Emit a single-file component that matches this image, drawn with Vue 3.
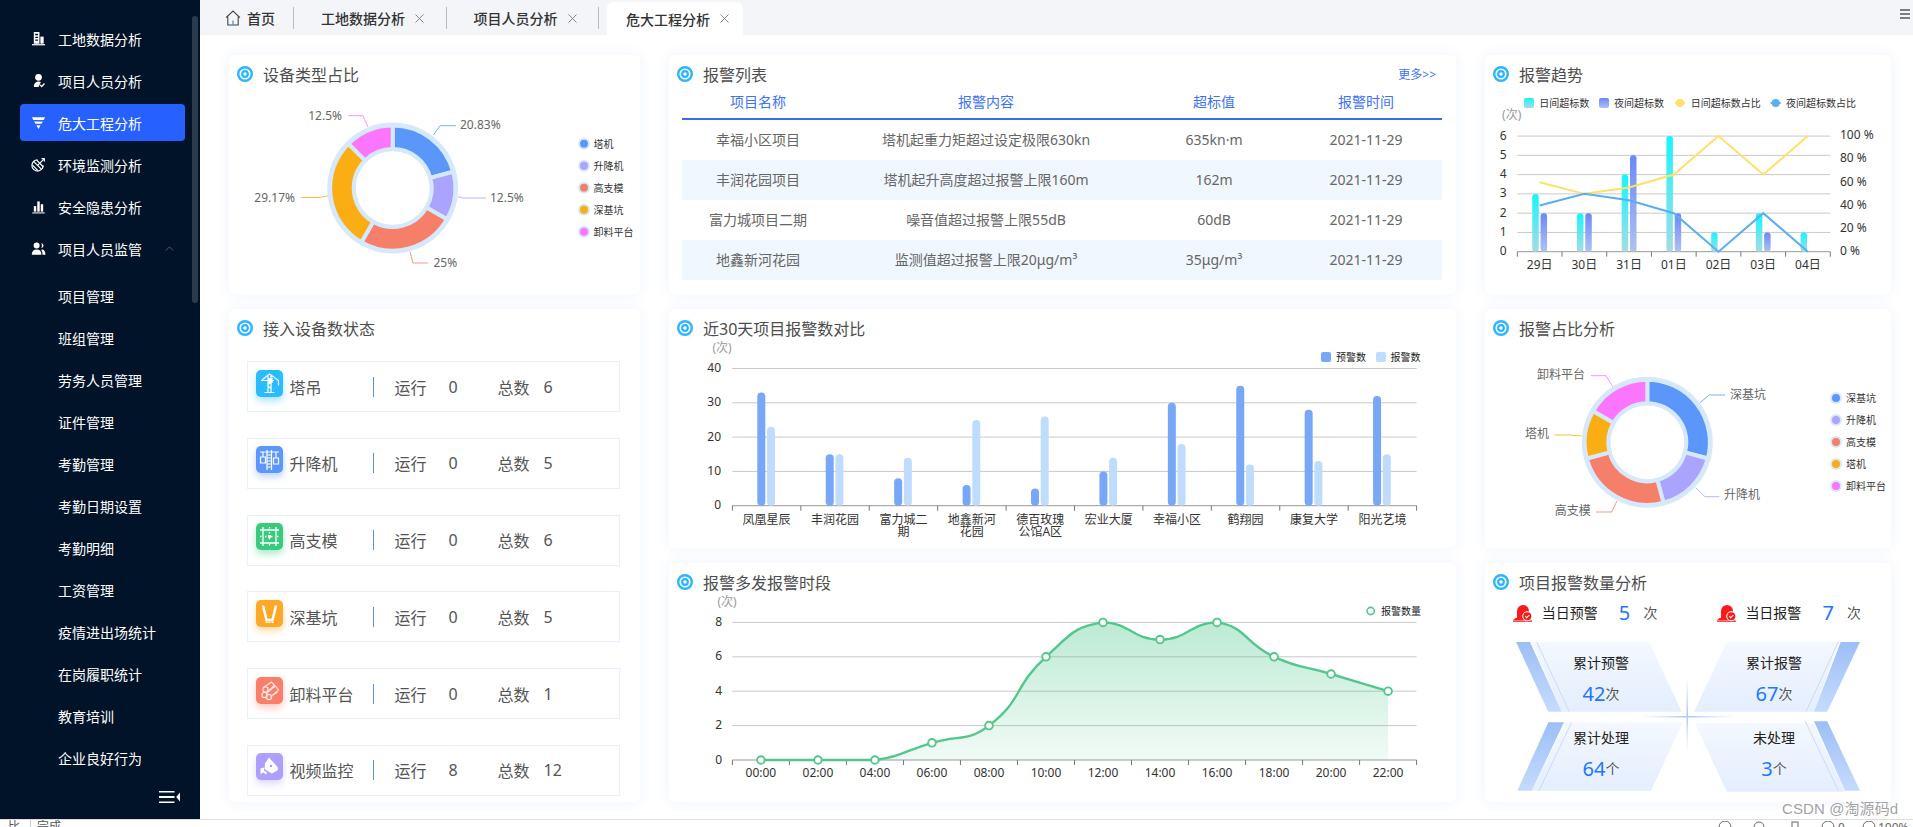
<script setup>
const menuTop = [
  { t: '工地数据分析', fill: ['M3 1h6v12.5H3zM4.5 3v1.5h3V3zM4.5 6v1.5h3V6zM4.5 9v1.5h3V9z', 'M10 6h3.5v7.5H10z', 'M1 14h14v1.3H1z'], stroke: [] },
  { t: '项目人员分析', fill: ['M8 1a3.6 3.6 0 1 1 0 7.2A3.6 3.6 0 0 1 8 1z', 'M3 15c0-3.6 2-6 5-6 1 0 1.8.2 2.6.7L8 15z'], stroke: ['M9.8 12.6l1.6 1.8 3-3.2'] },
  { t: '危大工程分析', active: true, fill: ['M1 2.5h14L13.6 5.2H2.4z', 'M3.4 6.8h9.2L11.2 9.4H4.8z', 'M5.8 11h4.4L8 14.8z'], stroke: [] },
  { t: '环境监测分析', fill: [], stroke: ['M7 3a6 6 0 1 0 6 6', 'M3 5l8 8', 'M1.6 8.6l5.6 5.6', 'M6 3.4l7 7', 'M7 9l7-7', 'M11.2 1.8H14.2V4.8'] },
  { t: '安全隐患分析', fill: ['M3 7.6h2.6v5.9H3z', 'M6.7 2.6h2.6v10.9H6.7z', 'M10.4 5.6H13v7.9h-2.6z', 'M1.4 14.3h13.2v1.1H1.4z'], stroke: [] },
  { t: '项目人员监管', arrow: true, fill: ['M6 1.6a3.2 3.2 0 1 1 0 6.4 3.2 3.2 0 0 1 0-6.4z', 'M.8 14.6C.8 11 2.8 9 6 9s5.2 2 5.2 5.6z', 'M11 2a2.9 2.9 0 0 1 0 5.7C11.8 6 11.8 3.8 11 2z', 'M12.2 9c2 .5 3.2 2.4 3.2 5.6h-3.1c0-2.3-.5-4-1.6-5.2z'], stroke: [] }
]
const menuSub = ['项目管理', '班组管理', '劳务人员管理', '证件管理', '考勤管理', '考勤日期设置', '考勤明细', '工资管理', '疫情进出场统计', '在岗履职统计', '教育培训', '企业良好行为']
const tabs = [{ t: '工地数据分析' }, { t: '项目人员分析' }]
const alarms = [
  ['幸福小区项目', '塔机起重力矩超过设定极限630kn', '635kn·m', '2021-11-29'],
  ['丰润花园项目', '塔机起升高度超过报警上限160m', '162m', '2021-11-29'],
  ['富力城项目二期', '噪音值超过报警上限55dB', '60dB', '2021-11-29'],
  ['地鑫新河花园', '监测值超过报警上限20μg/m³', '35μg/m³', '2021-11-29']
]
const devices = [
  { n: '塔吊', c: 'c1', run: 0, total: 6, k: 'crane' },
  { n: '升降机', c: 'c2', run: 0, total: 5, k: 'lift' },
  { n: '高支模', c: 'c3', run: 0, total: 6, k: 'grid' },
  { n: '深基坑', c: 'c4', run: 0, total: 5, k: 'pit' },
  { n: '卸料平台', c: 'c5', run: 0, total: 1, k: 'pipe' },
  { n: '视频监控', c: 'c6', run: 8, total: 12, k: 'cam' }
]

const BLUE = '#5b97fb', PURP = '#aaa4fe', RED = '#f57f69', GOLD = '#fbad14', PINK = '#fb75fd'

function pt(cx, cy, r, a) {
  const t = (a * 2 * Math.PI) - Math.PI / 2
  return [cx + r * Math.cos(t), cy + r * Math.sin(t)]
}
function arc(cx, cy, R, r, a0, a1) {
  const large = a1 - a0 > 0.5 ? 1 : 0
  const p1 = pt(cx, cy, R, a0), p2 = pt(cx, cy, R, a1), p3 = pt(cx, cy, r, a1), p4 = pt(cx, cy, r, a0)
  return `M${p1[0]} ${p1[1]}A${R} ${R} 0 ${large} 1 ${p2[0]} ${p2[1]}L${p3[0]} ${p3[1]}A${r} ${r} 0 ${large} 0 ${p4[0]} ${p4[1]}Z`
}
function donut(cx, cy, data) {
  let a = 0
  return data.map(d => {
    const s = { d: arc(cx, cy, 62.6, 39, a, a + d.v), c: d.c }
    a += d.v
    return s
  })
}
const d1 = { cx: 392.7, cy: 188 }
const d1Seg = donut(d1.cx, d1.cy, [
  { v: .2083, c: BLUE }, { v: .125, c: PURP }, { v: .25, c: RED }, { v: .2917, c: GOLD }, { v: .125, c: PINK }
])
const d1Lines = [
  { p: '433.5,135 440,125.7 456,125.7', c: BLUE, t: '20.83%', x: 460, y: 124.5, a: 'start' },
  { p: '458,196.7 463,198 486,198', c: PURP, t: '12.5%', x: 490, y: 197, a: 'start' },
  { p: '410,251.7 413,263 428,263', c: RED, t: '25%', x: 433.5, y: 262, a: 'start' },
  { p: '328,196 318,197.5 301,197.5', c: GOLD, t: '29.17%', x: 295, y: 197, a: 'end' },
  { p: '368,127 363,115.7 348,115.7', c: PINK, t: '12.5%', x: 342, y: 115, a: 'end' }
]
const d1Legend = [['塔机', BLUE], ['升降机', PURP], ['高支模', RED], ['深基坑', GOLD], ['卸料平台', PINK]]
  .map((l, i) => ({ t: l[0], c: l[1], y: 143.7 + 22 * i }))

const d2 = { cx: 1647.3, cy: 442.3 }
const d2Seg = donut(d2.cx, d2.cy, [
  { v: 7 / 24, c: BLUE }, { v: 4 / 24, c: PURP }, { v: 6 / 24, c: RED }, { v: 3 / 24, c: GOLD }, { v: 4 / 24, c: PINK }
])
const d2Lines = [
  { p: '1700,402.7 1709.3,395 1725,395', c: BLUE, t: '深基坑', x: 1730, y: 394, a: 'start' },
  { p: '1695.7,487.7 1705,496.7 1719.3,496.7', c: PURP, t: '升降机', x: 1724, y: 494, a: 'start' },
  { p: '1617,501 1611.7,512 1596,512', c: RED, t: '高支模', x: 1590.7, y: 510.7, a: 'end' },
  { p: '1581.7,436 1570,435 1554.3,435', c: GOLD, t: '塔机', x: 1549, y: 433.7, a: 'end' },
  { p: '1612.7,386.7 1606,375.7 1590.7,375.7', c: PINK, t: '卸料平台', x: 1585, y: 374.7, a: 'end' }
]
const d2Legend = [['深基坑', BLUE], ['升降机', PURP], ['高支模', RED], ['塔机', GOLD], ['卸料平台', PINK]]
  .map((l, i) => ({ t: l[0], c: l[1], y: 398 + 22 * i }))

/* trend chart */
const tr = { x0: 1517.3, x1: 1830.3, y0: 251.7, unit: 19.27 }
const trW = (tr.x1 - tr.x0) / 7
const trA = [3, 2, 4, 6, 1, 2, 1], trB = [2, 2, 5, 2, 0, 1, 0]
const trDays = ['29日', '30日', '31日', '01日', '02日', '03日', '04日']
const trPctA = [60, 50, 55.5, 66.7, 100, 66.7, 100], trPctB = [40, 50, 44.4, 33.3, 0, 33.3, 0]
const trCx = i => tr.x0 + trW * (i + .5)
const trGrid = [1, 2, 3, 4, 5, 6].map(v => tr.y0 - v * tr.unit)
const trYL = [0, 1, 2, 3, 4, 5, 6].map(v => ({ v, y: tr.y0 - v * tr.unit }))
const trYR = [0, 20, 40, 60, 80, 100].map((v, i) => ({ t: v + ' %', y: 250.5 - i * 23.15 }))
const trTicks = Array.from({ length: 8 }, (_, i) => tr.x0 + trW * i)
const trBarsA = trA.map((v, i) => ({ x: trCx(i) - 7.4, h: v * tr.unit }))
const trBarsB = trB.map((v, i) => ({ x: trCx(i) + .9, h: v * tr.unit })).filter(b => b.h > 0)
const pctLine = arr => arr.map((v, i) => `${trCx(i)},${tr.y0 - v * 1.157}`).join(' ')

/* bar chart */
const br = { x0: 732.4, x1: 1416.6, y0: 505.7, unit: 3.43 }
const brW = (br.x1 - br.x0) / 10
const brA = [33, 15, 8, 6, 5, 10, 30, 35, 28, 32], brB = [23, 15, 14, 25, 26, 14, 18, 12, 13, 15]
const brNames = [['凤凰星辰'], ['丰润花园'], ['富力城二', '期'], ['地鑫新河', '花园'], ['德百玫瑰', '公馆A区'], ['宏业大厦'], ['幸福小区'], ['鹤翔园'], ['康复大学'], ['阳光艺境']]
const brCx = i => br.x0 + brW * (i + .5)
const brGrid = [10, 20, 30, 40].map(v => br.y0 - v * br.unit)
const brYL = [0, 10, 20, 30, 40].map(v => ({ v, y: br.y0 - v * br.unit }))
const brTicks = Array.from({ length: 11 }, (_, i) => br.x0 + brW * i)

/* line chart */
const ln = { x0: 732.4, x1: 1416.6, y0: 760, unit: 17.2 }
const lnW = (ln.x1 - ln.x0) / 12
const lnV = [0, 0, 0, 1, 2, 6, 8, 7, 8, 6, 5, 4]
const lnPts = lnV.map((v, i) => [ln.x0 + lnW * (i + .5), ln.y0 - v * ln.unit])
const lnLabels = lnV.map((_, i) => ({ t: String(i * 2).padStart(2, '0') + ':00', x: lnPts[i][0] }))
const lnGrid = [2, 4, 6, 8].map(v => ln.y0 - v * ln.unit)
const lnYL = [0, 2, 4, 6, 8].map(v => ({ v, y: ln.y0 - v * ln.unit }))
const lnTicks = Array.from({ length: 13 }, (_, i) => ln.x0 + lnW * i)

function smooth(pts, k = .5) {
  const n = pts.length
  let d = `M${pts[0][0]} ${pts[0][1]}`
  const clamp = (v, a, b) => Math.min(Math.max(v, Math.min(a, b)), Math.max(a, b))
  const len = (a, b) => Math.hypot(a[0] - b[0], a[1] - b[1])
  const cps = pts.map((p, i) => {
    const prev = pts[Math.max(i - 1, 0)], next = pts[Math.min(i + 1, n - 1)]
    const vx = next[0] - prev[0], vy = next[1] - prev[1]
    const lp = len(p, prev), ln2 = len(p, next)
    const tot = lp + ln2 || 1
    return {
      out: [p[0] + vx * k * ln2 / tot, clamp(p[1] + vy * k * ln2 / tot, p[1], next[1])],
      in: [p[0] - vx * k * lp / tot, clamp(p[1] - vy * k * lp / tot, p[1], prev[1])]
    }
  })
  for (let i = 1; i < n; i++) {
    d += `C${cps[i - 1].out[0]} ${cps[i - 1].out[1]} ${cps[i].in[0]} ${cps[i].in[1]} ${pts[i][0]} ${pts[i][1]}`
  }
  return d
}
const lnPath = smooth(lnPts)
const lnArea = `${lnPath}L${lnPts[11][0]} ${ln.y0}L${lnPts[0][0]} ${ln.y0}Z`

const alerts = [{ t: '当日预警', n: 5 }, { t: '当日报警', n: 7 }]
const panels = [
  { band: '1516,642 1530,642 1561.7,711.7 1548.3,711.7', main: '1531.7,642 1649.3,642 1681.7,711.7 1561.7,711.7', line: '1536.7,642 1569.3,711.7', t: '累计预警', n: '42', u: '次', cx: 1601, y1: 662, y2: 692.7 },
  { band: '1840.7,642 1860,642 1827.3,711.7 1814,711.7', main: '1726.7,642 1839.3,642 1814,711.7 1694,711.7', line: '1838.3,642 1806,711.7', t: '累计报警', n: '67', u: '次', cx: 1774, y1: 662, y2: 692.7 },
  { band: '1548.3,722.3 1564,722.3 1531.7,790.7 1517.3,790.7', main: '1565.5,722.3 1682.7,722.3 1651,790.7 1531.7,790.7', line: '1571.7,722.3 1539,790.7', t: '累计处理', n: '64', u: '个', cx: 1601, y1: 737, y2: 767.7 },
  { band: '1814,721.3 1827.3,721.3 1860,790.7 1845,790.7', main: '1695,723 1813.3,723 1845,791.7 1726.7,791.7', line: '1805,720.7 1838.3,790.7', t: '未处理', n: '3', u: '个', cx: 1774, y1: 737, y2: 767.7 }
]
</script>

<template>
  <div class="page">
    <aside class="side">
      <div class="thumb"></div>
      <ul class="menu">
        <li v-for="m in menuTop" :key="m.t" class="mi" :class="{ on: m.active }">
          <svg class="mic" viewBox="0 0 16 16" width="15" height="15">
            <path v-for="d in m.fill" :key="d" :d="d" fill="#fff" fill-rule="evenodd" />
            <path v-for="d in m.stroke" :key="d" :d="d" fill="none" stroke="#fff" stroke-width="1.3" />
          </svg>
          <span>{{ m.t }}</span>
          <svg v-if="m.arrow" class="chev" viewBox="0 0 10 6" width="9" height="5"><path d="M.5 5.5L5 1l4.5 4.5" fill="none" stroke="#5c6b7c" stroke-width="1" /></svg>
        </li>
      </ul>
      <ul class="sub">
        <li v-for="s in menuSub" :key="s">{{ s }}</li>
      </ul>
      <svg class="collapse" viewBox="0 0 21 12" width="21" height="12">
        <path d="M0 .5h15.5M0 6h15.5M0 11.5h15.5" stroke="#fff" stroke-width="1.8" fill="none" />
        <path d="M21 1.6v8.8L17.2 6z" fill="#fff" />
      </svg>
    </aside>

    <main class="main">
      <nav class="tabs">
        <div class="tab home">
          <svg viewBox="0 0 16 16" width="16" height="16">
            <path d="M1 7.6L8 1l7 6.6M2.8 6.4V15h10.4V6.4" fill="none" stroke="#444" stroke-width="1.1" />
            <path d="M7.4 10.5h1.2V15H7.4z" fill="#2f8fe8" />
          </svg>
          <span>首页</span>
        </div>
        <div v-for="tb in tabs" :key="tb.t" class="tab">
          <span>{{ tb.t }}</span>
          <svg class="x" viewBox="0 0 9 9" width="9" height="9"><path d="M.5.5l8 8M8.5.5l-8 8" stroke="#888" stroke-width="1" /></svg>
        </div>
        <div class="tab active">
          <span>危大工程分析</span>
          <svg class="x" viewBox="0 0 9 9" width="9" height="9"><path d="M.5.5l8 8M8.5.5l-8 8" stroke="#888" stroke-width="1" /></svg>
        </div>
        <svg class="more" viewBox="0 0 10 10" width="10" height="10"><path d="M0 1h10M0 5h10M0 9h10" stroke="#555" stroke-width="1.6" /></svg>
      </nav>

      <section class="grid">
        <!-- device ratio -->
        <article class="card">
          <header class="ct"><svg class="ring" viewBox="0 0 16 16" width="16" height="16"><circle cx="8" cy="8" r="6.8" fill="none" stroke="#2bb5ff" stroke-width="2.4" /><circle cx="8" cy="8" r="2.8" fill="none" stroke="#2bb5ff" stroke-width="2.2" /></svg><h3>设备类型占比</h3></header>
          <svg class="ch" viewBox="229 93 410 201" width="410" height="201">
            <circle :cx="d1.cx" :cy="d1.cy" r="65.5" fill="#d6e9fc" />
            <circle :cx="d1.cx" :cy="d1.cy" r="37" fill="#fff" />
            <path v-for="s in d1Seg" :key="s.c" :d="s.d" :fill="s.c" stroke="#d6e9fc" stroke-width="4" />
            <g v-for="l in d1Lines" :key="l.t + l.x">
              <polyline :points="l.p" fill="none" :stroke="l.c" stroke-width="1" opacity=".8" />
              <text :x="l.x" :y="l.y" :text-anchor="l.a" class="t12 mid" fill="#666">{{ l.t }}</text>
            </g>
            <g v-for="l in d1Legend" :key="l.t">
              <circle cx="584" :cy="l.y" r="6" fill="#d6e9fc" />
              <circle cx="584" :cy="l.y" r="4" :fill="l.c" />
              <text x="593.5" :y="l.y" class="t10 mid" fill="#333">{{ l.t }}</text>
            </g>
          </svg>
        </article>

        <!-- alarm list -->
        <article class="card">
          <header class="ct"><svg class="ring" viewBox="0 0 16 16" width="16" height="16"><circle cx="8" cy="8" r="6.8" fill="none" stroke="#2bb5ff" stroke-width="2.4" /><circle cx="8" cy="8" r="2.8" fill="none" stroke="#2bb5ff" stroke-width="2.2" /></svg><h3>报警列表</h3><a class="mores">更多&gt;&gt;</a></header>
          <div class="table">
            <div class="tr th"><span>项目名称</span><span>报警内容</span><span>超标值</span><span>报警时间</span></div>
            <div v-for="(r, i) in alarms" :key="i" class="tr td" :class="{ alt: i % 2 === 1 }">
              <span v-for="c in r" :key="c">{{ c }}</span>
            </div>
          </div>
        </article>

        <!-- trend -->
        <article class="card">
          <header class="ct"><svg class="ring" viewBox="0 0 16 16" width="16" height="16"><circle cx="8" cy="8" r="6.8" fill="none" stroke="#2bb5ff" stroke-width="2.4" /><circle cx="8" cy="8" r="2.8" fill="none" stroke="#2bb5ff" stroke-width="2.2" /></svg><h3>报警趋势</h3></header>
          <svg class="ch" viewBox="1485 93 406 201" width="406" height="201">
            <defs>
              <linearGradient id="gCy" x1="0" y1="0" x2="0" y2="1"><stop offset="0" stop-color="#14f6ff" /><stop offset="1" stop-color="#a6dbe3" /></linearGradient>
              <linearGradient id="gBl" x1="0" y1="0" x2="0" y2="1"><stop offset="0" stop-color="#6a88f8" /><stop offset="1" stop-color="#b0c2ee" /></linearGradient>
            </defs>
            <rect x="1524" y="98" width="10" height="10" rx="2" fill="url(#gCy)" />
            <text x="1539.3" y="102.7" class="t10 mid" fill="#333">日间超标数</text>
            <rect x="1599" y="98" width="10" height="10" rx="2" fill="url(#gBl)" />
            <text x="1614" y="102.7" class="t10 mid" fill="#333">夜间超标数</text>
            <path d="M1675 103h10" stroke="#fde168" stroke-width="2" /><circle cx="1680" cy="103" r="4" fill="#fde168" />
            <text x="1690.7" y="102.7" class="t10 mid" fill="#333">日间超标数占比</text>
            <path d="M1770.7 103h10" stroke="#58aff5" stroke-width="2" /><circle cx="1775.7" cy="103" r="4" fill="#58aff5" />
            <text x="1786" y="102.7" class="t10 mid" fill="#333">夜间超标数占比</text>
            <text x="1511.7" y="114" class="t12 mid" text-anchor="middle" fill="#999">(次)</text>
            <path v-for="y in trGrid" :key="y" :d="`M${tr.x0} ${y}H${tr.x1}`" stroke="#c9c9c9" stroke-width="1" />
            <path :d="`M${tr.x0} ${tr.y0}H${tr.x1}`" stroke="#999" stroke-width="1" />
            <path v-for="x in trTicks" :key="x" :d="`M${x} ${tr.y0}v5`" stroke="#777" stroke-width="1" />
            <rect v-for="b in trBarsA" :key="b.x" :x="b.x" :y="tr.y0 - b.h" width="6.5" :height="b.h" rx="3" fill="url(#gCy)" />
            <rect v-for="b in trBarsB" :key="b.x" :x="b.x" :y="tr.y0 - b.h" width="6.5" :height="b.h" rx="3" fill="url(#gBl)" />
            <polyline :points="pctLine(trPctA)" fill="none" stroke="#fde168" stroke-width="2" />
            <polyline :points="pctLine(trPctB)" fill="none" stroke="#58aff5" stroke-width="2" />
            <text v-for="l in trYL" :key="l.v" x="1506.7" :y="l.y - 1" text-anchor="end" class="t12 mid" fill="#333">{{ l.v }}</text>
            <text v-for="l in trYR" :key="l.t" x="1840" :y="l.y" class="t12 mid" fill="#333">{{ l.t }}</text>
            <text v-for="(d, i) in trDays" :key="d" :x="trCx(i)" y="264.5" text-anchor="middle" class="t12 mid" fill="#333">{{ d }}</text>
          </svg>
        </article>

        <!-- devices -->
        <article class="card span2">
          <header class="ct"><svg class="ring" viewBox="0 0 16 16" width="16" height="16"><circle cx="8" cy="8" r="6.8" fill="none" stroke="#2bb5ff" stroke-width="2.4" /><circle cx="8" cy="8" r="2.8" fill="none" stroke="#2bb5ff" stroke-width="2.2" /></svg><h3>接入设备数状态</h3></header>
          <div class="devs">
            <div v-for="d in devices" :key="d.n" class="dev">
              <div class="dic" :class="d.c">
                <svg viewBox="0 0 27 27" width="27" height="27">
                  <g v-if="d.k === 'crane'" fill="none" stroke="#fff" stroke-width="1.2">
                    <path d="M6 10l7.5-6 9 6.5M5 10.5h13M12 5v17M15 5v17M12 9l3 2.5M15 12l-3 2.5M12 16l3 2.5M8.5 22.5h10M22.5 10.5v5" />
                    <path d="M13 8.5h3v4h-3z" fill="#fff" />
                  </g>
                  <g v-else-if="d.k === 'lift'" fill="none" stroke="#fff" stroke-width="1.2">
                    <path d="M4 6h19M11 4v20M15.5 4v20M11 9h4.5M11 12h4.5M11 15h4.5M11 18h4.5M11 21h4.5M7 6v5M20 6v6" />
                    <path d="M4.5 11h5v6h-5zM17.5 12h5v6h-5z" />
                  </g>
                  <g v-else-if="d.k === 'grid'" fill="none" stroke="#fff" stroke-width="1.3">
                    <path d="M7 4v19M20 4v19M4 7h19M4 20h19" />
                    <path d="M4 13.5h2M21 13.5h2M13.5 4v2M13.5 21v2M9 13.5h9M13.5 9v9" stroke-dasharray="1.5 1.5" />
                    <rect x="12" y="12" width="3" height="3" fill="#fff" stroke="none" />
                  </g>
                  <g v-else-if="d.k === 'pit'">
                    <path d="M7 5.5L10.5 20h6L20 5.5" fill="none" stroke="#fff" stroke-width="2.5" />
                    <path d="M9.5 22.3h8" stroke="#fff" stroke-width="1.5" stroke-dasharray="2 1" />
                  </g>
                  <g v-else-if="d.k === 'pipe'" fill="none" stroke="#ffe4de" stroke-width="1.2">
                    <circle cx="8.5" cy="18" r="2.6" />
                    <circle cx="13" cy="20" r="2.6" />
                    <circle cx="9.5" cy="12.5" r="2.6" />
                    <path d="M7.5 10.5l8-5.5 3 3.5-7 6M10.5 16l9-7 3 4-8 7M15.5 19l6-4" />
                  </g>
                  <g v-else fill="#fff">
                    <path d="M13 4.5l8.5 9.5.5 3-6 3.5-4.5-2.5-3-2 .5-5.5z" />
                    <path d="M4.5 15.5l3.5-1v3l3 2-1 2-2.5-2-3 1.5z" />
                    <circle cx="15" cy="13" r="1.3" fill="#ab9fff" />
                  </g>
                </svg>
              </div>
              <span class="dn">{{ d.n }}</span>
              <i class="dv"></i>
              <span class="dl">运行</span>
              <span class="dr">{{ d.run }}</span>
              <span class="dl">总数</span>
              <span class="dt">{{ d.total }}</span>
            </div>
          </div>
        </article>

        <!-- bars -->
        <article class="card">
          <header class="ct"><svg class="ring" viewBox="0 0 16 16" width="16" height="16"><circle cx="8" cy="8" r="6.8" fill="none" stroke="#2bb5ff" stroke-width="2.4" /><circle cx="8" cy="8" r="2.8" fill="none" stroke="#2bb5ff" stroke-width="2.2" /></svg><h3>近30天项目报警数对比</h3></header>
          <svg class="ch" viewBox="669 347 787 201" width="787" height="201">
            <text x="722" y="347" text-anchor="middle" class="t12 mid" fill="#999">(次)</text>
            <rect x="1321" y="352" width="10" height="10" rx="2" fill="#78a7f7" />
            <text x="1336" y="357" class="t10 mid" fill="#222">预警数</text>
            <rect x="1376" y="352" width="10" height="10" rx="2" fill="#bfdcff" />
            <text x="1390.6" y="357" class="t10 mid" fill="#222">报警数</text>
            <path v-for="y in brGrid" :key="y" :d="`M${br.x0} ${y}H${br.x1}`" stroke="#c9c9c9" stroke-width="1" />
            <path :d="`M${br.x0} ${br.y0}H${br.x1}`" stroke="#999" stroke-width="1" />
            <path v-for="x in brTicks" :key="x" :d="`M${x} ${br.y0}v5`" stroke="#777" stroke-width="1" />
            <rect v-for="(v, i) in brA" :key="'a' + i" :x="brCx(i) - 9.3" :y="br.y0 - v * br.unit" width="8" :height="v * br.unit" rx="4" fill="#78a7f7" />
            <rect v-for="(v, i) in brB" :key="'b' + i" :x="brCx(i) + .4" :y="br.y0 - v * br.unit" width="8" :height="v * br.unit" rx="4" fill="#bfdcff" />
            <text v-for="l in brYL" :key="l.v" x="721" :y="l.y - 1" text-anchor="end" class="t12 mid" fill="#333">{{ l.v }}</text>
            <g v-for="(n, i) in brNames" :key="i">
              <text v-for="(s, j) in n" :key="s" :x="brCx(i)" :y="519 + j * 12" text-anchor="middle" class="t12 mid" fill="#333">{{ s }}</text>
            </g>
          </svg>
        </article>

        <!-- alarm share -->
        <article class="card">
          <header class="ct"><svg class="ring" viewBox="0 0 16 16" width="16" height="16"><circle cx="8" cy="8" r="6.8" fill="none" stroke="#2bb5ff" stroke-width="2.4" /><circle cx="8" cy="8" r="2.8" fill="none" stroke="#2bb5ff" stroke-width="2.2" /></svg><h3>报警占比分析</h3></header>
          <svg class="ch" viewBox="1485 347 406 201" width="406" height="201">
            <circle :cx="d2.cx" :cy="d2.cy" r="65.5" fill="#d6e9fc" />
            <circle :cx="d2.cx" :cy="d2.cy" r="37" fill="#fff" />
            <path v-for="s in d2Seg" :key="s.c" :d="s.d" :fill="s.c" stroke="#d6e9fc" stroke-width="4" />
            <g v-for="l in d2Lines" :key="l.t">
              <polyline :points="l.p" fill="none" :stroke="l.c" stroke-width="1" opacity=".8" />
              <text :x="l.x" :y="l.y" :text-anchor="l.a" class="t12 mid" fill="#666">{{ l.t }}</text>
            </g>
            <g v-for="l in d2Legend" :key="l.t">
              <circle cx="1836" :cy="l.y" r="6" fill="#d6e9fc" />
              <circle cx="1836" :cy="l.y" r="4" :fill="l.c" />
              <text x="1846" :y="l.y" class="t10 mid" fill="#333">{{ l.t }}</text>
            </g>
          </svg>
        </article>

        <!-- line -->
        <article class="card">
          <header class="ct"><svg class="ring" viewBox="0 0 16 16" width="16" height="16"><circle cx="8" cy="8" r="6.8" fill="none" stroke="#2bb5ff" stroke-width="2.4" /><circle cx="8" cy="8" r="2.8" fill="none" stroke="#2bb5ff" stroke-width="2.2" /></svg><h3>报警多发报警时段</h3></header>
          <svg class="ch" viewBox="669 601 787 201" width="787" height="201">
            <defs>
              <linearGradient id="gArea" gradientUnits="userSpaceOnUse" x1="0" y1="622" x2="0" y2="760"><stop offset="0" stop-color="#4fc98c" stop-opacity=".38" /><stop offset="1" stop-color="#4fc98c" stop-opacity=".08" /></linearGradient>
            </defs>
            <text x="727" y="601" text-anchor="middle" class="t12 mid" fill="#999">(次)</text>
            <circle cx="1370.7" cy="611" r="3.6" fill="#fff" stroke="#4fc98c" stroke-width="1.6" />
            <text x="1381" y="611" class="t10 mid" fill="#222">报警数量</text>
            <path v-for="y in lnGrid" :key="y" :d="`M${ln.x0} ${y}H${ln.x1}`" stroke="#c9c9c9" stroke-width="1" />
            <path :d="`M${ln.x0} ${ln.y0}H${ln.x1}`" stroke="#999" stroke-width="1" />
            <path v-for="x in lnTicks" :key="x" :d="`M${x} ${ln.y0}v5`" stroke="#777" stroke-width="1" />
            <path :d="lnArea" fill="url(#gArea)" />
            <path :d="lnPath" fill="none" stroke="#52c78c" stroke-width="2.4" />
            <circle v-for="(p, i) in lnPts" :key="i" :cx="p[0]" :cy="p[1]" r="3.8" fill="#fff" stroke="#52c78c" stroke-width="1.9" />
            <text v-for="l in lnYL" :key="l.v" x="722" :y="l.y - 1" text-anchor="end" class="t12 mid" fill="#333">{{ l.v }}</text>
            <text v-for="l in lnLabels" :key="l.t" :x="l.x" y="772.7" text-anchor="middle" class="t12 mid" fill="#333">{{ l.t }}</text>
          </svg>
        </article>

        <!-- counts -->
        <article class="card">
          <header class="ct"><svg class="ring" viewBox="0 0 16 16" width="16" height="16"><circle cx="8" cy="8" r="6.8" fill="none" stroke="#2bb5ff" stroke-width="2.4" /><circle cx="8" cy="8" r="2.8" fill="none" stroke="#2bb5ff" stroke-width="2.2" /></svg><h3>项目报警数量分析</h3></header>
          <div class="alerts">
            <div v-for="a in alerts" :key="a.t" class="al">
              <svg viewBox="0 0 20 19" width="20" height="19">
                <path d="M4 15V8a6 6 0 0 1 12 0v7z" fill="#f61c1c" />
                <path d="M0 17.2L2.5 15h14l2 2.2z" fill="#f61c1c" />
                <path d="M0 17.6h19v1.2H0z" fill="#f61c1c" />
                <circle cx="14.3" cy="13.2" r="5" fill="#fff" />
                <circle cx="14.3" cy="13.2" r="4" fill="#f61c1c" />
                <path d="M12.3 13.2l1.5 1.5 2.5-2.7" fill="none" stroke="#fff" stroke-width="1.1" />
              </svg>
              <span class="alt1">{{ a.t }}</span>
              <b class="aln">{{ a.n }}</b>
              <span class="alu">次</span>
            </div>
          </div>
          <svg class="ch" viewBox="1485 623 406 179" width="406" height="179">
            <defs>
              <linearGradient id="gMain" x1="0" y1="0" x2="0" y2="1"><stop offset="0" stop-color="#f4f8ff" /><stop offset="1" stop-color="#e4eefe" /></linearGradient>
              <linearGradient id="gBand" x1="0" y1="0" x2="0" y2="1"><stop offset="0" stop-color="#9dbff6" /><stop offset="1" stop-color="#c5dbfd" /></linearGradient>
              <linearGradient id="gStarH" x1="0" y1="0" x2="1" y2="0"><stop offset="0" stop-color="#bcd4fb" stop-opacity="0" /><stop offset=".5" stop-color="#a9c8fa" /><stop offset="1" stop-color="#bcd4fb" stop-opacity="0" /></linearGradient>
              <linearGradient id="gStarV" x1="0" y1="0" x2="0" y2="1"><stop offset="0" stop-color="#bcd4fb" stop-opacity="0" /><stop offset=".5" stop-color="#a9c8fa" /><stop offset="1" stop-color="#bcd4fb" stop-opacity="0" /></linearGradient>
            </defs>
            <g v-for="p in panels" :key="p.t">
              <polygon :points="p.main" fill="url(#gMain)" />
              <polygon :points="p.band" fill="url(#gBand)" />
              <polyline :points="p.line" fill="none" stroke="#bcd4fb" stroke-width=".8" />
              <text :x="p.cx" :y="p.y1" text-anchor="middle" class="t14 mid" fill="#222">{{ p.t }}</text>
              <text :x="p.cx" :y="p.y2" text-anchor="middle" class="mid"><tspan class="pn">{{ p.n }}</tspan><tspan class="pu">{{ p.u }}</tspan></text>
            </g>
            <rect x="1640" y="716" width="95" height="1.5" fill="url(#gStarH)" />
            <rect x="1686.5" y="676.7" width="1.5" height="76" fill="url(#gStarV)" />
          </svg>
        </article>
      </section>
    </main>

    <footer class="status">
      <span class="st1">比</span><i class="sep"></i><span>完成</span>
      <svg class="stic" viewBox="0 0 190 10" width="190" height="10">
        <g fill="none" stroke="#666" stroke-width="1">
          <circle cx="7" cy="6" r="6" /><circle cx="41" cy="6" r="5" /><rect x="74" y="1" width="6" height="8" /><circle cx="110" cy="6" r="6" /><circle cx="151" cy="6" r="6" />
        </g>
        <text x="120" y="11" class="t12" fill="#666">0</text>
        <text x="160" y="11" class="t12" fill="#666">100%</text>
      </svg>
    </footer>
    <div class="mark">CSDN @淘源码d</div>
  </div>
</template>

<style scoped>
.page {
  position: relative;
  display: grid;
  grid-template-columns: 200px 1fr;
  grid-template-rows: 819px 8px;
  width: 1913px;
  height: 827px;
  overflow: hidden;
  background: #fff;
  font-family: "Noto Sans", "Noto Sans CJK SC", sans-serif;
  color: #555;
}
.side {
  position: relative;
  background: #001329;
  padding-top: 20px;
  display: flex;
  flex-direction: column;
  overflow: hidden;
}
.thumb {
  position: absolute;
  left: 192px;
  top: 16px;
  width: 6px;
  height: 287px;
  border-radius: 3px;
  background: #2b3b4e;
}
.menu, .sub { list-style: none; margin: 0; padding: 0; }
.mi {
  display: flex;
  align-items: center;
  height: 37px;
  margin: 0 15px 5px 20px;
  padding-left: 11px;
  border-radius: 4px;
  color: #fff;
  font-size: 14px;
}
.mi.on { background: #2661ff; }
.mic { margin-right: 12px; flex: none; }
.chev { margin-left: 23px; }
.sub { padding-top: 4px; }
.sub li {
  height: 42px;
  line-height: 42px;
  padding-left: 58px;
  color: #fff;
  font-size: 14px;
}
.collapse { margin: 11px 0 0 159px; flex: none; }

.main { display: flex; flex-direction: column; min-width: 0; }
.tabs {
  position: relative;
  display: flex;
  align-items: stretch;
  height: 35px;
  background: #f4f5f9;
  font-size: 14px;
  color: #333;
  font-weight: 500;
}
.tab {
  display: flex;
  align-items: center;
  margin-top: 7px;
  height: 22px;
  padding: 0 21.5px 0 27px;
  border-right: 1px solid #bbb;
}
.tab .x { margin-left: 10px; }
.tab.home { padding: 0 17px 0 25px; border-right: 1px solid #bbb; width: 94px; box-sizing: border-box; }
.tab.home svg { margin-right: 6px; }
.tab.active {
  margin: 2px 0 0 8px;
  height: 33px;
  padding: 0 14px 0 19px;
  background: #fff;
  border: 0;
  border-radius: 6px 6px 0 0;
}
.more { position: absolute; right: 3px; top: 9px; }

.grid {
  display: grid;
  grid-template-columns: 411px 787px 406px;
  grid-template-rows: 239px 239px 239px;
  gap: 15px 29px;
  padding: 20px 0 0 29px;
}
.card {
  display: flex;
  flex-direction: column;
  min-width: 0;
  background: #fff;
  border-radius: 6px;
  box-shadow: 0 0 14px rgba(64, 120, 255, .09);
}
.card.span2 { grid-column: 1; grid-row: 2 / span 2; }
.ct {
  display: flex;
  align-items: center;
  height: 38px;
  flex: none;
  padding-left: 8px;
}
.ring { flex: none; }
.ct h3 {
  margin: 0 0 0 10px;
  font-size: 16px;
  font-weight: 400;
  color: #4d4d4d;
}
.mores {
  margin-left: auto;
  margin-right: 20px;
  font-size: 12px;
  color: #3d73f5;
}
.ch { display: block; overflow: visible; flex: none; }
.t10 { font-size: 10px; }
.t12 { font-size: 12px; }
.t14 { font-size: 14px; }
.mid { dominant-baseline: central; }
.pn { font-size: 20px; fill: #2277ff; }
.pu { font-size: 14px; fill: #555; }

.table { margin: 0 14px 0 13px; font-size: 14px; }
.tr {
  display: grid;
  grid-template-columns: 20% 40% 20% 20%;
  text-align: center;
}
.th {
  height: 27px;
  line-height: 17px;
  color: #3d73f5;
  border-bottom: 2px solid #3a6ee8;
  box-sizing: border-box;
}
.td { height: 40px; line-height: 40px; color: #666; }
.td.alt { background: #f1f7fe; }

.devs {
  display: flex;
  flex-direction: column;
  gap: 25.8px;
  margin: 14px 20px 0 18px;
}
.dev {
  display: flex;
  align-items: center;
  height: 51px;
  box-sizing: border-box;
  border: 1.5px solid #e8effd;
  padding-left: 7.5px;
  font-size: 16px;
  color: #555;
}
.dic {
  flex: none;
  align-self: flex-start;
  width: 27px;
  height: 27px;
  margin-top: 7.5px;
  border-radius: 5px;
}
.dic svg { display: block; }
.c1 { background: #29bdff; box-shadow: 0 4px 7px rgba(41, 189, 255, .4); }
.c2 { background: #5b97ff; box-shadow: 0 4px 7px rgba(91, 151, 255, .4); }
.c3 { background: #38cb7d; box-shadow: 0 4px 7px rgba(56, 203, 125, .4); }
.c4 { background: #ffa726; box-shadow: 0 4px 7px rgba(255, 167, 38, .4); }
.c5 { background: #f97f6c; box-shadow: 0 4px 7px rgba(249, 127, 108, .4); }
.c6 { background: #ab9fff; box-shadow: 0 4px 7px rgba(171, 159, 255, .4); }
.dn { width: 83px; margin-left: 7px; flex: none; }
.dv { width: 1.5px; height: 20px; background: #5b8fe8; flex: none; margin-right: 20.5px; }
.dl { width: 32px; flex: none; }
.dr { width: 49px; margin-left: 22px; flex: none; }
.dt { margin-left: 14px; }

.alerts { display: flex; height: 22px; flex: none; font-size: 14px; }
.al {
  display: flex;
  align-items: center;
  width: 203.7px;
  padding-left: 28px;
  box-sizing: border-box;
  flex: none;
}
.alt1 { margin-left: 8.7px; color: #222; white-space: nowrap; }
.aln { margin-left: 21px; font-size: 20px; font-weight: 400; color: #2277ff; width: 11px; }
.alu { margin-left: 13.7px; color: #555; }

.status {
  grid-column: 1 / span 2;
  position: relative;
  display: flex;
  align-items: flex-start;
  height: 8px;
  overflow: hidden;
  box-sizing: border-box;
  border-top: 1px solid #dedede;
  font-size: 12px;
  line-height: 14px;
  color: #555;
  padding-left: 8px;
}
.st1 { width: 22px; }
.sep { width: 1px; height: 8px; background: #ccc; margin-right: 6px; }
.stic { margin-left: auto; margin-right: 5px; margin-top: 1px; overflow: hidden; }
.mark {
  position: absolute;
  left: 1782px;
  top: 800px;
  font-family: "Liberation Sans", "Noto Sans CJK SC", sans-serif;
  font-size: 15px;
  line-height: 18px;
  letter-spacing: .1px;
  color: rgba(110, 110, 110, .65);
}
</style>
